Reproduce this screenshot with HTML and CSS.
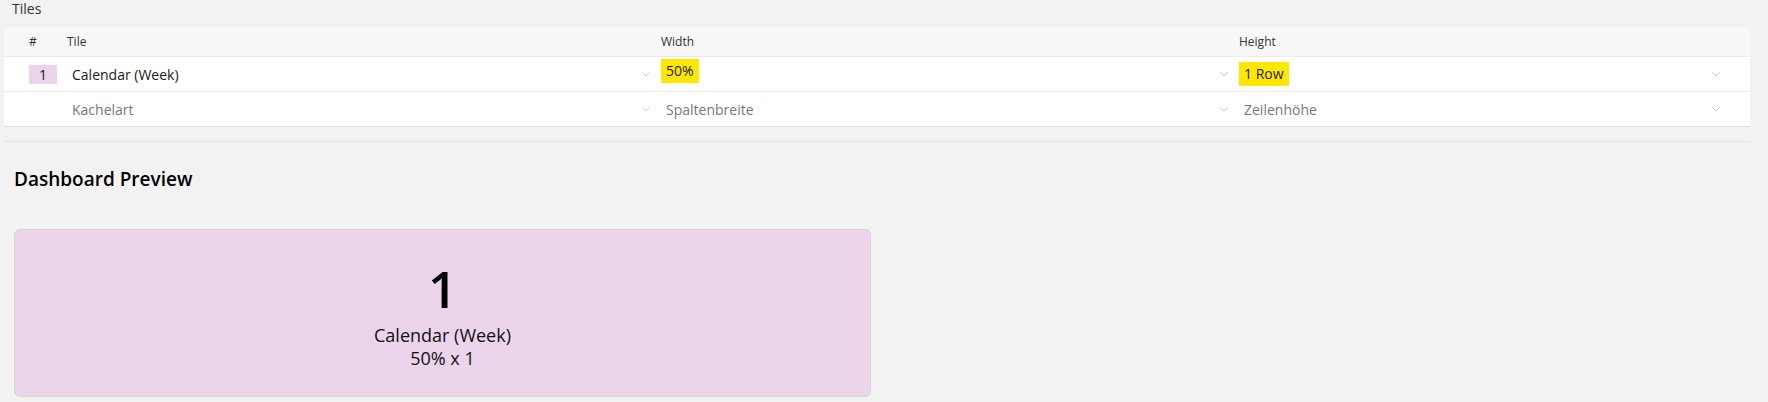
FILE: index.html
```html
<!DOCTYPE html>
<html lang="de">
<head>
<meta charset="utf-8">
<title>Tiles</title>
<link rel="stylesheet" href="styles.css">
</head>
<body>
<div class="page">
  <div class="section-title">Tiles</div>
  <div class="tiles-table">
    <div class="row head">
      <div class="cell num">#</div>
      <div class="cell">Tile</div>
      <div class="cell">Width</div>
      <div class="cell">Height</div>
      <div class="cell"></div>
    </div>
    <div class="row">
      <div class="cell num"><span class="badge">1</span></div>
      <div class="cell">
        <div class="select"><span class="value">Calendar (Week)</span><svg class="chev" width="8" height="5" viewBox="0 0 8 5"><polyline points="0.5,0.5 4,4 7.5,0.5"/></svg></div>
      </div>
      <div class="cell">
        <div class="select"><span class="value hl hl-up">50%</span><svg class="chev" width="8" height="5" viewBox="0 0 8 5"><polyline points="0.5,0.5 4,4 7.5,0.5"/></svg></div>
      </div>
      <div class="cell">
        <div class="select"><span class="value hl">1 Row</span><svg class="chev" width="8" height="5" viewBox="0 0 8 5"><polyline points="0.5,0.5 4,4 7.5,0.5"/></svg></div>
      </div>
      <div class="cell"></div>
    </div>
    <div class="row last">
      <div class="cell num"></div>
      <div class="cell">
        <div class="select"><span class="value placeholder">Kachelart</span><svg class="chev" width="8" height="5" viewBox="0 0 8 5"><polyline points="0.5,0.5 4,4 7.5,0.5"/></svg></div>
      </div>
      <div class="cell">
        <div class="select"><span class="value placeholder">Spaltenbreite</span><svg class="chev" width="8" height="5" viewBox="0 0 8 5"><polyline points="0.5,0.5 4,4 7.5,0.5"/></svg></div>
      </div>
      <div class="cell">
        <div class="select"><span class="value placeholder">Zeilenhöhe</span><svg class="chev" width="8" height="5" viewBox="0 0 8 5"><polyline points="0.5,0.5 4,4 7.5,0.5"/></svg></div>
      </div>
      <div class="cell"></div>
    </div>
  </div>
  <div class="separator"></div>
  <h2 class="preview-title">Dashboard Preview</h2>
  <div class="preview-grid">
    <div class="tile">
      <div class="tile-num">1</div>
      <div class="tile-line">Calendar (Week)</div>
      <div class="tile-line">50% x 1</div>
    </div>
  </div>
</div>
</body>
</html>
```

FILE: styles.css
```css
html, body {
  margin: 0;
  padding: 0;
  background: #f2f2f2;
  font-family: "Open Sans", "Noto Sans", Arial, sans-serif;
  color: #222;
}

.page {
  padding: 0 18px 0 4px;
}

.section-title {
  font-size: 14px;
  line-height: 19px;
  padding-left: 8px;
  margin-top: -1px;
  color: #333;
}

.tiles-table {
  margin-top: 9px;
  background: #fff;
  border-bottom: 1px solid #dcdcdc;
}

.row {
  display: grid;
  grid-template-columns: 57px 594px 578px 492px 1fr;
  height: 34px;
  border-bottom: 1px solid #ececec;
}

.row.last {
  border-bottom: none;
}

.row.head {
  height: 29px;
  background: #f8f8f8;
  font-size: 12px;
  color: #333;
}

.cell {
  display: flex;
  align-items: center;
  padding-left: 6px;
  min-width: 0;
}

.cell.num {
  padding-left: 25px;
}

.badge {
  display: inline-flex;
  align-items: center;
  justify-content: center;
  width: 28px;
  height: 19px;
  background: #ecd5ea;
  font-size: 14px;
  color: #222;
}

.select {
  flex: 1;
  display: flex;
  align-items: center;
  justify-content: space-between;
  padding-right: 5px;
  height: 100%;
  font-size: 14px;
}

.value {
  padding-left: 5px;
  color: #1a1a1a;
}

.value.hl {
  background: #ffe800;
  padding: 0 5px;
  line-height: 24px;
}

.value.hl-up {
  margin-bottom: 6px;
}

.value.placeholder {
  color: #777;
}

.chev {
  fill: none;
  stroke: #c8c8c8;
  stroke-width: 1;
  flex: none;
}

.separator {
  margin-top: 14px;
  border-top: 1px solid #e6e6e6;
}

.preview-title {
  margin: 25px 0 0 10px;
  font-size: 19px;
  line-height: 25px;
  font-weight: 600;
  color: #000;
}

.preview-grid {
  display: grid;
  grid-template-columns: repeat(2, 1fr);
  gap: 22px;
  margin-top: 37px;
  padding-left: 10px;
}

.tile {
  height: 164px;
  padding-top: 2px;
  background: #ecd5ea;
  border: 1px solid #d9d3d8;
  border-radius: 6px;
  display: flex;
  flex-direction: column;
  align-items: center;
  justify-content: center;
  color: #111;
}

.tile-num {
  font-size: 51px;
  line-height: 60px;
  font-weight: 600;
  margin-bottom: 6px;
  color: #000;
}

.tile-line {
  font-size: 18px;
  line-height: 23px;
}
```
